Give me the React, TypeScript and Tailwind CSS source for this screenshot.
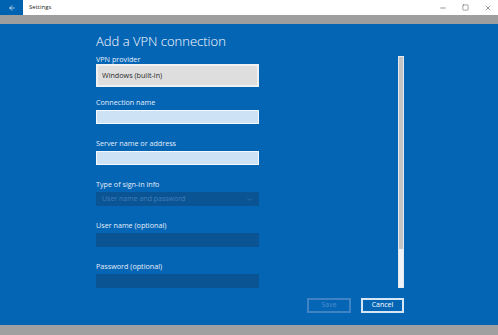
import React from "react";
import { ArrowLeft, Minus, Square, X, ChevronDown } from "lucide-react";

const font = { fontFamily: '"Open Sans", "Noto Sans", sans-serif' };

const Label: React.FC<{ text: string; className?: string }> = ({ text, className }) => (
  <div className={`h-[10px] text-[7.2px] leading-[10px] text-[#e3eef9] ${className ?? ""}`}>{text}</div>
);

export default function App() {
  return (
    <div style={font} className="flex h-[335px] w-[498px] flex-col overflow-hidden bg-[#0565b5]">
      {/* title bar */}
      <div className="flex h-[15px] items-center bg-white">
        <div className="flex h-full w-[23px] items-center justify-center bg-[#0063b1]">
          <ArrowLeft className="h-[8px] w-[8px] text-white" strokeWidth={2} />
        </div>
        <span className="ml-[6px] text-[6px] text-[#222]">Settings</span>
        <div className="ml-auto flex items-center gap-[15px] pr-[6px] text-[#333]">
          <Minus className="h-[8px] w-[8px]" strokeWidth={1.5} />
          <Square className="h-[7px] w-[7px]" strokeWidth={1.5} />
          <X className="h-[8px] w-[8px]" strokeWidth={1.5} />
        </div>
      </div>
      <div className="h-[9px] bg-[#9e9e9e]" />

      {/* content */}
      <div className="flex-1 pt-[7px]">
        <div className="ml-[96px] flex w-[308px] flex-col">
          <div className="flex">
            <div className="flex w-[302px] flex-col">
              <h1 className="h-[20px] text-[13px] font-light leading-[20px] text-white">Add a VPN connection</h1>

              <Label text="VPN provider" className="mt-[3px]" />
              <div className="flex h-[23px] w-[163px] items-center border-2 border-[#f0f0f0] bg-[#dedede] px-[4px] text-[7.2px] text-[#2a2a2a]">
                Windows (built-in)
              </div>

              <Label text="Connection name" className="mt-[10px]" />
              <div className="mt-[3px] h-[14px] w-[163px] border border-[#f4f9fd] bg-[#cde2f5]" />

              <Label text="Server name or address" className="mt-[14px]" />
              <div className="mt-[3px] h-[14px] w-[163px] border border-[#f4f9fd] bg-[#cde2f5]" />

              <Label text="Type of sign-in info" className="mt-[14px]" />
              <div className="mt-[3px] flex h-[14px] w-[163px] items-center justify-between bg-[#0b5494] px-[6px] text-[7px] text-[#3f7fba]">
                <span>User name and password</span>
                <ChevronDown className="h-[7px] w-[7px] text-[#3f7fba]" />
              </div>

              <Label text="User name (optional)" className="mt-[14px]" />
              <div className="mt-[3px] h-[14px] w-[163px] bg-[#0b5494]" />

              <Label text="Password (optional)" className="mt-[14px]" />
              <div className="mt-[3px] h-[14px] w-[163px] bg-[#0b5494]" />
            </div>

            {/* scrollbar */}
            <div className="mt-[25px] flex w-[6px] flex-col bg-[#e4eaf0] p-[1px]">
              <div className="flex-1 bg-[#c3c3c3]" />
              <div className="h-[38px] bg-[#eef3f8]" />
            </div>
          </div>

          <div className="mt-[10px] flex justify-end gap-[10px]">
            <button className="flex h-[15px] w-[44px] items-center justify-center border-2 border-[#3f83c4] text-[7px] text-[#4f8ecb]">
              Save
            </button>
            <button className="flex h-[15px] w-[43px] items-center justify-center border-2 border-[#d6e6f5] text-[7px] text-white">
              Cancel
            </button>
          </div>
        </div>
      </div>

      <div className="h-[10px] bg-[#a0a0a0]" />
    </div>
  );
}
